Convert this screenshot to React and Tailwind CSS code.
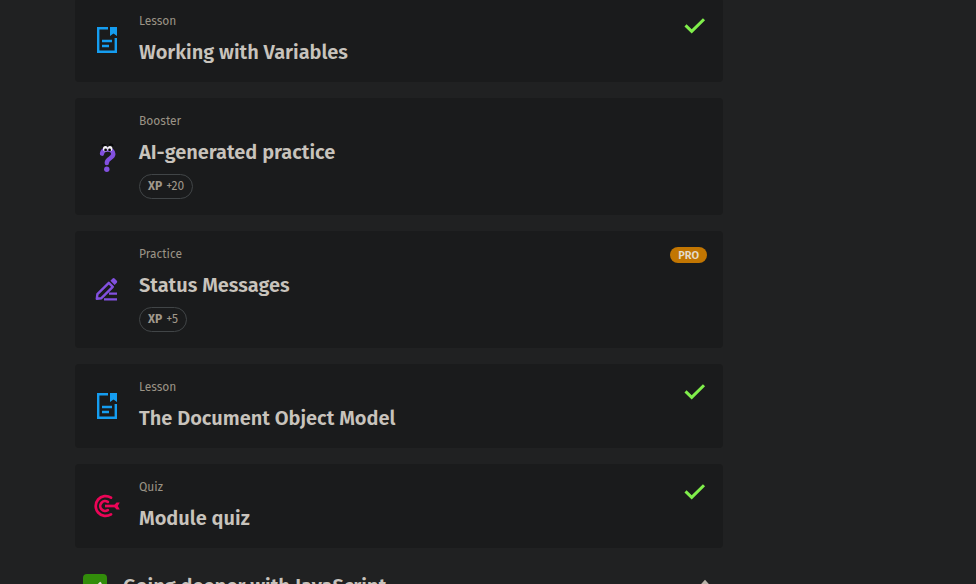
import React from "react";

function LessonIcon() {
  return (
    <svg width="32" height="32" viewBox="0 0 32 32" aria-hidden="true" fill="none" stroke="#159df0" strokeWidth="2.4">
      <path d="M17 4.2H7.2V27.8H24.8V14" />
      <path d="M19 3H26V12L22.5 9.5L19 12Z" fill="#159df0" stroke="none" />
      <path d="M11 17H21M11 22H18" />
    </svg>
  );
}

function BoosterIcon() {
  return (
    <svg width="32" height="32" viewBox="0 0 32 32" aria-hidden="true" fill="none">
      <path
        d="M11 12.7C11.5 9.5 14 8.5 16.5 8.5C20 8.5 22.3 10.2 22.3 13.1C22.3 17.5 15.8 17 15.8 22"
        stroke="#8250df"
        strokeWidth="4.4"
        strokeLinecap="round"
      />
      <circle cx="15.8" cy="28.2" r="2.7" fill="#8250df" />
      <path d="M11 5C12 3.5 14 3.5 15 4.6M18 3.6C20 2.8 21.5 3.8 22 5" stroke="#050608" strokeWidth="1.5" />
      <ellipse cx="14.4" cy="7.8" rx="2.4" ry="2.7" fill="#f4f1f6" />
      <ellipse cx="19" cy="7.6" rx="2.4" ry="2.7" fill="#f4f1f6" />
      <circle cx="14.6" cy="8.9" r="1.4" fill="#050608" />
      <circle cx="18.6" cy="8.9" r="1.4" fill="#050608" />
    </svg>
  );
}

function PracticeIcon() {
  return (
    <svg width="32" height="32" viewBox="0 0 32 32" aria-hidden="true" fill="none" stroke="#8250df" strokeWidth="2.4" strokeLinejoin="round">
      <path d="M5.8 24.8L6.4 20.2L17.8 8.8L21.8 12.8L10.4 24.2Z" />
      <path d="M19.4 6.7L21.6 4.5Q22.6 3.7 23.6 4.6L25.8 6.7Q26.7 7.7 25.8 8.7L23.6 10.9Z" fill="#8250df" stroke="none" />
      <path d="M18 19.6H26M13 25.4H26" />
    </svg>
  );
}

function QuizIcon() {
  return (
    <svg width="32" height="32" viewBox="0 0 32 32" aria-hidden="true" fill="none" stroke="#ec0557" strokeWidth="2.7">
      <path d="M20 7.7A9.9 9.9 0 1 0 20 24.3" strokeLinecap="round" />
      <path d="M16.8 11.9A4.9 4.9 0 1 0 16.8 20.1" strokeLinecap="round" />
      <path d="M14 16H25" />
      <path d="M22.5 16L25.5 12.4H28.8L26.8 16L28.8 19.6H25.5Z" fill="#ec0557" stroke="none" />
    </svg>
  );
}

function DoneMark() {
  return (
    <svg width="24" height="24" viewBox="0 0 24 24" role="img" aria-label="Completed" className="shrink-0">
      <path d="M2.5 11.4L8.7 17.4L21 5.2" fill="none" stroke="#80ee4b" strokeWidth="3" />
    </svg>
  );
}

const activities = [
  { kind: "Lesson", title: "Working with Variables", Icon: LessonIcon, done: true },
  { kind: "Booster", title: "AI-generated practice", Icon: BoosterIcon, xp: "+20" },
  { kind: "Practice", title: "Status Messages", Icon: PracticeIcon, xp: "+5", pro: true },
  { kind: "Lesson", title: "The Document Object Model", Icon: LessonIcon, done: true },
  { kind: "Quiz", title: "Module quiz", Icon: QuizIcon, done: true },
];

function ActivityCard({ kind, title, Icon, xp, done, pro }) {
  return (
    <li>
      <a href="#activity" className="flex items-center gap-4 rounded bg-[#1a1b1c] p-4">
        <Icon />
        <span className="flex flex-1 flex-col items-start gap-2">
          <span className="pb-0.5 text-xs leading-[14px] text-[#9b9386]">{kind}</span>
          <span className="text-xl leading-7 font-semibold text-[#c8c3bc]">{title}</span>
          {xp && (
            <span className="flex h-[25px] items-center gap-1 rounded-full border border-[#414547] px-2 pb-px text-xs text-[#a0988b]">
              <b className="font-bold">XP</b>
              <span>{xp}</span>
            </span>
          )}
        </span>
        <span className="flex shrink-0 self-start">
          {done && <DoneMark />}
          {pro && (
            <span className="rounded-full bg-[#c27602] px-2 pt-0.5 text-[11px] leading-[14px] font-semibold text-[#e4dccb]">PRO</span>
          )}
        </span>
      </a>
    </li>
  );
}

export default function App() {
  return (
    <main className="h-screen overflow-hidden bg-[#202122] pl-[75px] font-['Fira_Sans','Roboto',sans-serif]">
      <div className="-mt-0.5 max-w-[648px]">
        <ul className="flex flex-col gap-4">
          {activities.map((activity) => (
            <ActivityCard key={activity.title} {...activity} />
          ))}
        </ul>
        <button type="button" className="mt-6 flex w-full items-center gap-4 px-2 text-left">
          <span className="flex size-6 items-center justify-center rounded bg-[#328d0a]">
            <svg width="16" height="16" viewBox="0 0 16 16" aria-hidden="true">
              <path d="M2 8.5L6 12.5L14 4.5" fill="none" stroke="#e8e6e3" strokeWidth="2.4" />
            </svg>
          </span>
          <span className="flex-1 text-xl leading-7 font-semibold text-[#c8c3bc]">Going deeper with JavaScript</span>
          <svg width="20" height="20" viewBox="0 0 20 20" aria-hidden="true">
            <path d="M4 12.5L10 6L16 12.5" fill="none" stroke="#b9b3a9" strokeWidth="3" />
          </svg>
        </button>
      </div>
    </main>
  );
}
